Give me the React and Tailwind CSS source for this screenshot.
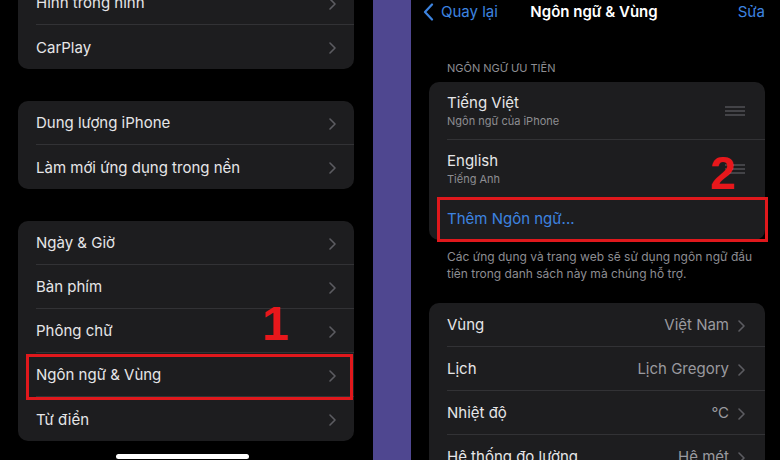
import React from 'react';

const Chevron = ({ className = '' }) => (
  <svg className={className} width="7" height="12" viewBox="0 0 7 12" fill="none">
    <path d="M1 1l5 5-5 5" stroke="currentColor" strokeWidth="1.6" strokeLinecap="round" strokeLinejoin="round" />
  </svg>
);

const Handle = () => (
  <svg width="20" height="10" viewBox="0 0 20 10" fill="none">
    <path d="M0 1h20M0 5h20M0 9h20" stroke="#6b6b70" strokeWidth="1.2" />
  </svg>
);

const LeftRow = ({ label, last }) => (
  <div className="h-[44px] flex items-center pl-[18px]">
    <div className={`flex-1 h-full flex items-center pr-[18px] pt-[2px] ${last ? '' : 'border-b border-[#323235]'}`}>
      <span className="flex-1 text-[15px] text-[#e6e6e8]">{label}</span>
      <Chevron className="text-[#5c5c61]" />
    </div>
  </div>
);

const LeftCard = ({ items, className = '' }) => (
  <div className={`bg-[#1d1d1f] rounded-[10px] ${className}`}>
    {items.map((it, i) => (
      <LeftRow key={it} label={it} last={i === items.length - 1} />
    ))}
  </div>
);

const ValueRow = ({ label, value }) => (
  <div className="h-[44px] flex items-center pl-[18px]">
    <div className="flex-1 h-full flex items-center pr-[20px] pt-[2px] border-b border-[#323235]">
      <span className="flex-1 text-[15px] text-[#e6e6e8]">{label}</span>
      <span className="text-[15px] text-[#9a9a9f] mr-[9px]">{value}</span>
      <Chevron className="text-[#5c5c61]" />
    </div>
  </div>
);

export default function App() {
  return (
    <div className="w-[780px] h-[460px] overflow-hidden flex bg-black" style={{ fontFamily: 'Inter, "Noto Sans", sans-serif' }}>
      {/* left phone */}
      <div className="relative w-[373px] h-full px-[18px] pr-[19px]">
        <LeftCard className="-mt-[19px]" items={['Hình trong hình', 'CarPlay']} />
        <LeftCard className="mt-[32px]" items={['Dung lượng iPhone', 'Làm mới ứng dụng trong nền']} />
        <LeftCard className="mt-[32px]" items={['Ngày & Giờ', 'Bàn phím', 'Phông chữ', 'Ngôn ngữ & Vùng', 'Từ điển']} />
        <div className="mt-[13px] mx-auto w-[133px] h-[5px] rounded-full bg-white translate-x-[-4px]" />
        <div className="absolute left-[26px] top-[354px] w-[327px] h-[46px] border-[3px] border-[#e0181c]" />
        <div className="absolute left-[262px] top-[300px] text-[48px] font-black leading-none text-[#e8171b]" style={{ fontFamily: '"Liberation Sans", Arial, sans-serif' }}>1</div>
      </div>

      {/* purple gap */}
      <div className="w-[38px] h-full bg-[#4f4790]" />

      {/* right phone */}
      <div className="relative flex-1 h-full pl-[18px] pr-[15px]">
        <div className="h-[24px] grid grid-cols-[1fr_auto_1fr] items-center -ml-[6px]">
          <div className="flex items-center text-[#3d84e0] text-[15px]">
            <svg width="11" height="18" viewBox="0 0 11 18" fill="none" className="mr-[7px]">
              <path d="M9 1.5L2 9l7 7.5" stroke="currentColor" strokeWidth="2.2" strokeLinecap="round" strokeLinejoin="round" />
            </svg>
            Quay lại
          </div>
          <div className="text-center text-[15px] font-semibold text-white">Ngôn ngữ &amp; Vùng</div>
          <div className="text-right text-[15px] text-[#3d84e0]">Sửa</div>
        </div>

        <div className="mt-[37px] pl-[18px] text-[11px] leading-[14px] text-[#8d8d92]">NGÔN NGỮ ƯU TIÊN</div>

        <div className="mt-[7px] bg-[#1d1d1f] rounded-[10px]">
          <div className="h-[58px] pl-[18px]">
            <div className="h-full flex items-center pr-[20px] border-b border-[#323235]">
              <div className="flex-1">
                <div className="text-[15px] leading-[20px] text-[#e6e6e8]">Tiếng Việt</div>
                <div className="text-[11px] leading-[16px] text-[#8d8d92]">Ngôn ngữ của iPhone</div>
              </div>
              <Handle />
            </div>
          </div>
          <div className="h-[58px] pl-[18px]">
            <div className="h-full flex items-center pr-[20px] border-b border-[#323235]">
              <div className="flex-1">
                <div className="text-[15px] leading-[20px] text-[#e6e6e8]">English</div>
                <div className="text-[11px] leading-[16px] text-[#8d8d92]">Tiếng Anh</div>
              </div>
              <Handle />
            </div>
          </div>
          <div className="h-[42px] pl-[18px] pt-[1px] flex items-center text-[15px] text-[#3d84e0]">Thêm Ngôn ngữ...</div>
        </div>

        <div className="mt-[8px] pl-[18px] text-[12px] leading-[17px] text-[#8d8d92]">
          Các ứng dụng và trang web sẽ sử dụng ngôn ngữ đầu<br />tiên trong danh sách này mà chúng hỗ trợ.
        </div>

        <div className="mt-[21px] bg-[#1d1d1f] rounded-[10px]">
          <ValueRow label="Vùng" value="Việt Nam" />
          <ValueRow label="Lịch" value="Lịch Gregory" />
          <ValueRow label="Nhiệt độ" value="°C" />
          <ValueRow label="Hệ thống đo lường" value="Hệ mét" />
        </div>

        <div className="absolute left-[26px] top-[197px] w-[331px] h-[45px] border-[3px] border-[#e0181c]" />
        <div className="absolute top-[150px] text-[46px] font-black leading-none text-[#e8171b]" style={{ fontFamily: '"Liberation Sans", Arial, sans-serif', left: 299 }}>2</div>
      </div>
    </div>
  );
}
